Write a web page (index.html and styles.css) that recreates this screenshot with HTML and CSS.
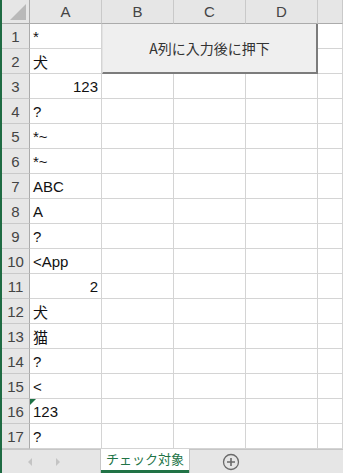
FILE: index.html
```html
<!DOCTYPE html>
<html>
<head>
    <title>チェック対象</title>
    <!-- Styling for the sheet -->
    <link rel="stylesheet" href="styles.css">
</head>
<body>
    <div class="window">
        <!-- Worksheet grid: row header, columns A-D and a partly visible E -->
        <div class="sheet">
            <div class="corner"><span class="corner-mark"></span></div>
            <div class="col-head">A</div><div class="col-head">B</div><div class="col-head">C</div><div class="col-head">D</div><div class="col-head"></div>

            <div class="row-head">1</div><div class="cell">*</div><div class="cell"></div><div class="cell"></div><div class="cell"></div><div class="cell"></div>
            <div class="row-head">2</div><div class="cell">犬</div><div class="cell"></div><div class="cell"></div><div class="cell"></div><div class="cell"></div>
            <div class="row-head">3</div><div class="cell num">123</div><div class="cell"></div><div class="cell"></div><div class="cell"></div><div class="cell"></div>
            <div class="row-head">4</div><div class="cell">?</div><div class="cell"></div><div class="cell"></div><div class="cell"></div><div class="cell"></div>
            <div class="row-head">5</div><div class="cell">*~</div><div class="cell"></div><div class="cell"></div><div class="cell"></div><div class="cell"></div>
            <div class="row-head">6</div><div class="cell">*~</div><div class="cell"></div><div class="cell"></div><div class="cell"></div><div class="cell"></div>
            <div class="row-head">7</div><div class="cell">ABC</div><div class="cell"></div><div class="cell"></div><div class="cell"></div><div class="cell"></div>
            <div class="row-head">8</div><div class="cell">A</div><div class="cell"></div><div class="cell"></div><div class="cell"></div><div class="cell"></div>
            <div class="row-head">9</div><div class="cell">?</div><div class="cell"></div><div class="cell"></div><div class="cell"></div><div class="cell"></div>
            <div class="row-head">10</div><div class="cell">&lt;App</div><div class="cell"></div><div class="cell"></div><div class="cell"></div><div class="cell"></div>
            <div class="row-head">11</div><div class="cell num">2</div><div class="cell"></div><div class="cell"></div><div class="cell"></div><div class="cell"></div>
            <div class="row-head">12</div><div class="cell">犬</div><div class="cell"></div><div class="cell"></div><div class="cell"></div><div class="cell"></div>
            <div class="row-head">13</div><div class="cell">猫</div><div class="cell"></div><div class="cell"></div><div class="cell"></div><div class="cell"></div>
            <div class="row-head">14</div><div class="cell">?</div><div class="cell"></div><div class="cell"></div><div class="cell"></div><div class="cell"></div>
            <div class="row-head">15</div><div class="cell">&lt;</div><div class="cell"></div><div class="cell"></div><div class="cell"></div><div class="cell"></div>
            <div class="row-head">16</div><div class="cell text-num">123</div><div class="cell"></div><div class="cell"></div><div class="cell"></div><div class="cell"></div>
            <div class="row-head">17</div><div class="cell">?</div><div class="cell"></div><div class="cell"></div><div class="cell"></div><div class="cell"></div>
        </div>

        <!-- Macro button sitting over B1:D2 -->
        <button class="macro-btn">A列に入力後に押下</button>

        <!-- Sheet tab bar -->
        <div class="tabs">
            <div class="tab-nav">
                <svg width="8" height="10" viewBox="0 0 8 10"><polygon points="6,1 2,5 6,9" fill="#c4c4c4"/></svg>
                <svg width="8" height="10" viewBox="0 0 8 10"><polygon points="2,1 6,5 2,9" fill="#c4c4c4"/></svg>
            </div>
            <div class="tab active">チェック対象</div>
            <div class="tab-rest">
                <svg class="add-sheet" width="18" height="18" viewBox="0 0 18 18">
                    <circle cx="9" cy="9" r="7.5" fill="none" stroke="#6a6a6a" stroke-width="1.3"/>
                    <path d="M9 5v8M5 9h8" stroke="#6a6a6a" stroke-width="1.6"/>
                </svg>
            </div>
        </div>
    </div>
</body>
</html>
```

FILE: styles.css
```css
body {
    margin: 0;
    padding: 0;
    background-color: #fff;
    font-family: "Liberation Sans", "Noto Sans CJK JP", sans-serif;
}

.window {
    position: relative;
    width: 341px;
    height: 473px;
    overflow: hidden;
    border-left: 2px solid #1f6b43; /* Green app frame edge */
}

/* Grid of the worksheet */
.sheet {
    display: grid;
    grid-template-columns: 28px 72px 72px 72px 72px 1fr;
    grid-template-rows: 24px repeat(17, 25px);
}

.sheet > div {
    box-sizing: border-box;
}

.corner {
    position: relative;
    background-color: #e6e6e6;
    border-right: 1px solid #ababab;
    border-bottom: 1px solid #ababab;
}

.corner-mark {
    position: absolute;
    right: 3px;
    bottom: 3px;
    width: 16px;
    height: 16px;
    background-color: #b9b9b9;
    clip-path: polygon(100% 0, 100% 100%, 0 100%);
}

.col-head {
    display: flex;
    align-items: center;
    justify-content: center;
    background-color: #e6e6e6;
    color: #444;
    font-size: 15px;
    border-right: 1px solid #c9c9c9;
    border-bottom: 1px solid #ababab;
}

.row-head {
    display: flex;
    align-items: center;
    justify-content: center;
    background-color: #e6e6e6;
    color: #444;
    font-size: 15px;
    border-right: 1px solid #ababab;
    border-bottom: 1px solid #c9c9c9;
}

.cell {
    position: relative;
    display: flex;
    align-items: center;
    padding: 1px 3px 0;
    color: #111;
    font-size: 15px;
    white-space: nowrap;
    border-right: 1px solid #d4d4d4;
    border-bottom: 1px solid #d4d4d4;
}

.cell.num {
    justify-content: flex-end;
}

/* Number stored as text: small green triangle in the corner */
.cell.text-num::before {
    content: "";
    position: absolute;
    left: 0;
    top: 0;
    width: 6px;
    height: 6px;
    background-color: #1e7145;
    clip-path: polygon(0 0, 100% 0, 0 100%);
}

/* Form control button over B1:D2 */
.macro-btn {
    position: absolute;
    left: 100px;
    top: 24px;
    width: 216px;
    height: 50px;
    box-sizing: border-box;
    margin: 0;
    padding: 0;
    background-color: #efefef;
    color: #333;
    font-family: "Noto Sans CJK JP", sans-serif;
    font-size: 14px;
    border: none;
    border-right: 2px solid #7c7c7c;
    border-bottom: 2px solid #7c7c7c;
    border-left: 1px solid #e3e3e3;
}

/* Sheet tab strip */
.tabs {
    display: flex;
    height: 24px;
}

.tab-nav {
    display: flex;
    align-items: center;
    gap: 20px;
    width: 99px;
    box-sizing: border-box;
    padding-left: 24px;
    background-color: #e6e6e6;
    border-top: 1px solid #c6c6c6;
    border-right: 1px solid #c6c6c6;
}

.tab {
    width: 88px;
    box-sizing: border-box;
    text-align: center;
    font-family: "Noto Sans CJK JP", sans-serif;
    font-size: 13px;
    line-height: 20px;
}

.tab.active {
    background-color: #fff;
    color: #217346;
    border-bottom: 3px solid #217346;
}

.tab-rest {
    flex: 1;
    display: flex;
    align-items: center;
    padding-left: 32px;
    background-color: #e6e6e6;
    border-top: 1px solid #c6c6c6;
    border-left: 1px solid #c6c6c6;
}
```
